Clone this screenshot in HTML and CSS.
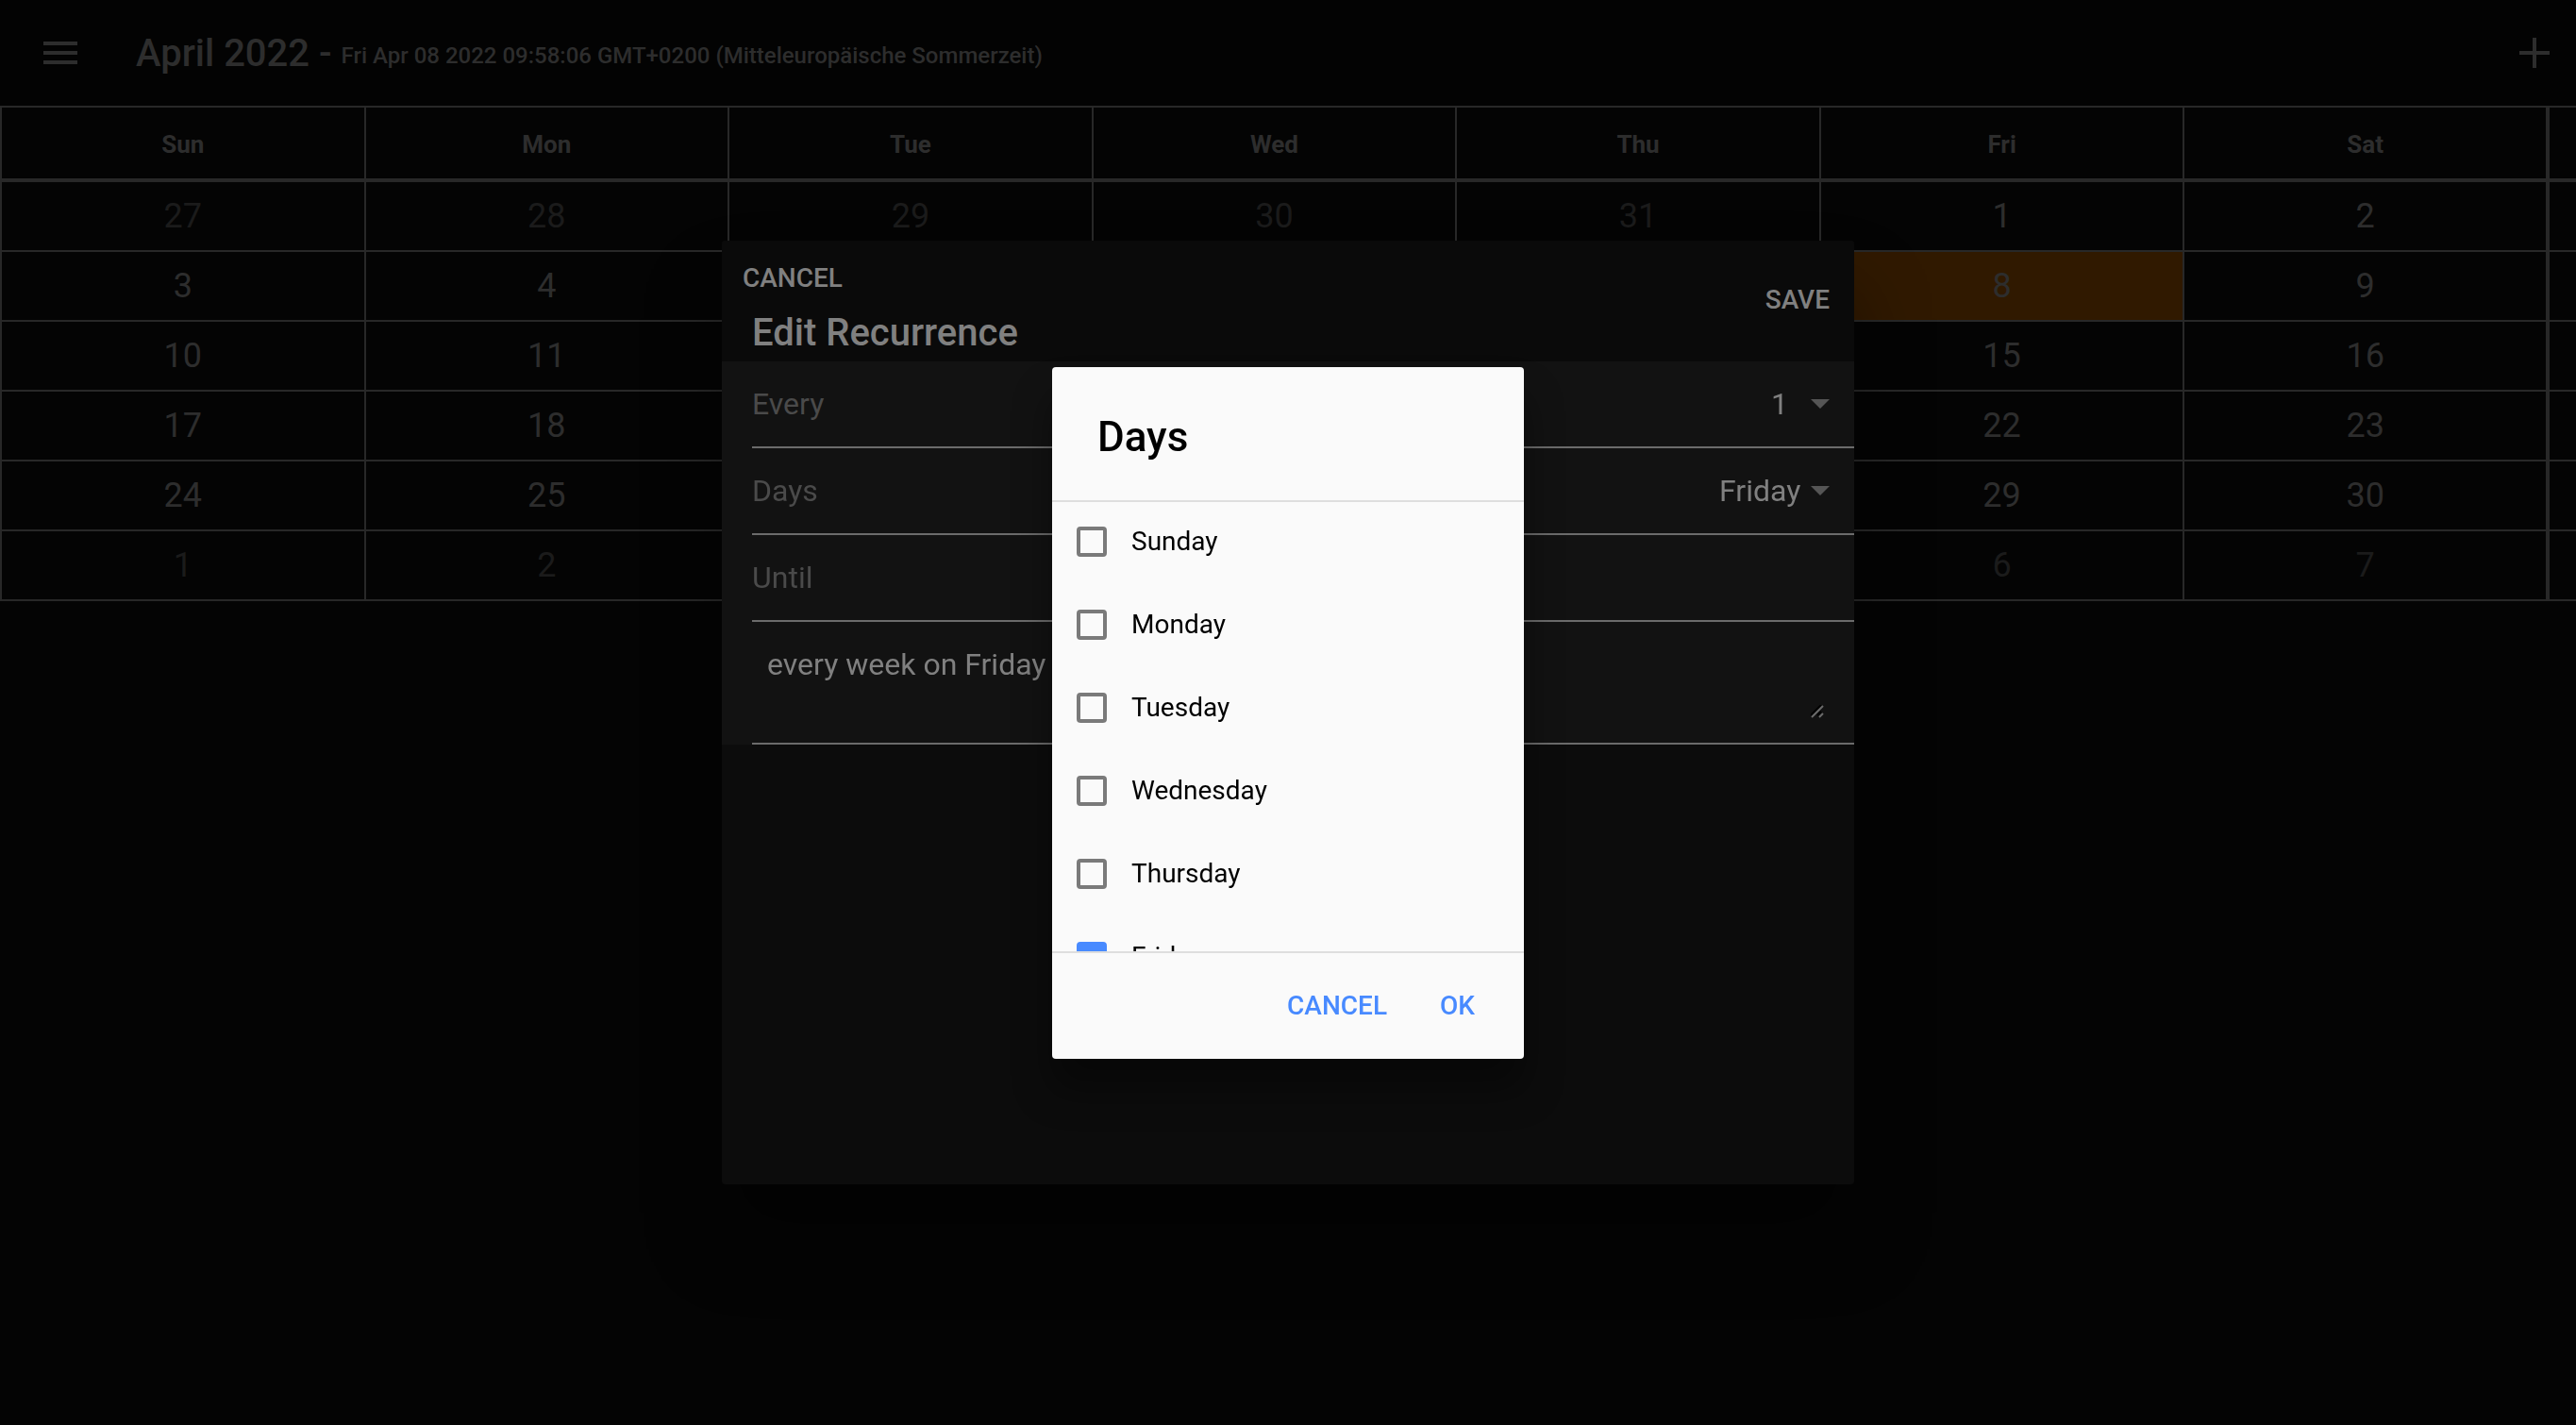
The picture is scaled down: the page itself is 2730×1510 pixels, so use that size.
FILE: index.html
```html
<!DOCTYPE html>
<html lang="en">
<head>
<meta charset="utf-8">
<title>April 2022</title>
<meta name="viewport" content="width=device-width, initial-scale=1">
<link rel="stylesheet" href="styles.css">
</head>
<body>
<header class="toolbar">
  <button class="icon-button" type="button" aria-label="Menu">
    <svg class="menu-icon" viewBox="0 0 36 24" aria-hidden="true"><path d="M0 0h36v4H0zM0 10h36v4H0zM0 20h36v4H0z"/></svg>
  </button>
  <h1 class="toolbar-title">April 2022 - <small class="toolbar-now">Fri Apr 08 2022 09:58:06 GMT+0200 (Mitteleuropäische Sommerzeit)</small></h1>
  <button class="icon-button" type="button" aria-label="Add event">
    <svg class="add-icon" viewBox="0 0 32 32" aria-hidden="true"><path d="M14 0h4v14h14v4H18v14h-4V18H0v-4h14z"/></svg>
  </button>
</header>

<main>
  <table class="month">
    <thead>
      <tr><th>Sun</th><th>Mon</th><th>Tue</th><th>Wed</th><th>Thu</th><th>Fri</th><th>Sat</th><td class="gutter"></td></tr>
    </thead>
    <tbody>
      <tr><td class="other">27</td><td class="other">28</td><td class="other">29</td><td class="other">30</td><td class="other">31</td><td>1</td><td>2</td><td class="gutter"></td></tr>
      <tr><td>3</td><td>4</td><td>5</td><td>6</td><td>7</td><td class="today">8</td><td>9</td><td class="gutter"></td></tr>
      <tr><td>10</td><td>11</td><td>12</td><td>13</td><td>14</td><td>15</td><td>16</td><td class="gutter"></td></tr>
      <tr><td>17</td><td>18</td><td>19</td><td>20</td><td>21</td><td>22</td><td>23</td><td class="gutter"></td></tr>
      <tr><td>24</td><td>25</td><td>26</td><td>27</td><td>28</td><td>29</td><td>30</td><td class="gutter"></td></tr>
      <tr><td class="other">1</td><td class="other">2</td><td class="other">3</td><td class="other">4</td><td class="other">5</td><td class="other">6</td><td class="other">7</td><td class="gutter"></td></tr>
    </tbody>
  </table>
</main>

<div class="overlay">
  <section class="modal" role="dialog" aria-labelledby="modal-title">
    <header class="modal-header">
      <div class="modal-heading">
        <button class="modal-button" type="button">CANCEL</button>
        <h2 class="modal-title" id="modal-title">Edit Recurrence</h2>
      </div>
      <button class="modal-button" type="button">SAVE</button>
    </header>
    <form class="fields">
      <div class="field">
        <label for="every">Every</label>
        <select class="field-select" id="every"><option>1</option></select>
        <svg class="caret" viewBox="0 0 20 10" aria-hidden="true"><path d="M0 0h20L10 10z"/></svg>
      </div>
      <div class="field">
        <label for="days">Days</label>
        <select class="field-select" id="days"><option>Friday</option></select>
        <svg class="caret" viewBox="0 0 20 10" aria-hidden="true"><path d="M0 0h20L10 10z"/></svg>
      </div>
      <div class="field">
        <label for="until">Until</label>
        <input class="field-input" id="until" type="text">
      </div>
      <div class="field field-tall">
        <textarea class="summary" aria-label="Summary" readonly>every week on Friday</textarea>
        <svg class="grip" viewBox="0 0 14 14" aria-hidden="true"><path class="grip-shade" d="M0 11L11 0M7 11l4-4"/><path d="M1 13L13 1M9 13l4-4"/></svg>
      </div>
    </form>
  </section>
</div>

<div class="overlay">
  <form class="alert" role="alertdialog" aria-labelledby="alert-title">
    <h2 class="alert-title" id="alert-title">Days</h2>
    <div class="choices">
      <label class="choice"><input type="checkbox">Sunday</label>
      <label class="choice"><input type="checkbox">Monday</label>
      <label class="choice"><input type="checkbox">Tuesday</label>
      <label class="choice"><input type="checkbox">Wednesday</label>
      <label class="choice"><input type="checkbox">Thursday</label>
      <label class="choice"><input type="checkbox" checked>Friday</label>
      <label class="choice"><input type="checkbox">Saturday</label>
    </div>
    <div class="alert-buttons">
      <button class="alert-button" type="button">CANCEL</button>
      <button class="alert-button" type="button">OK</button>
    </div>
  </form>
</div>
</body>
</html>
```
FILE: styles.css
```css
* {
  box-sizing: border-box;
}

body {
  margin: 0;
  min-height: 100vh;
  background: #040404;
  color: #2d2d2d;
  font-family: Roboto, "Liberation Sans", sans-serif;
  font-size: 32px;
}

h1,
h2 {
  margin: 0;
  font-weight: 500;
}

button,
input,
select,
textarea {
  margin: 0;
  padding: 0;
  border: 0;
  background: none;
  color: inherit;
  font: inherit;
}

svg {
  display: block;
  fill: currentColor;
}

/* Toolbar */

.toolbar {
  display: flex;
  align-items: center;
  height: 112px;
  padding: 0 12px 0 30px;
  background: #030303;
}

.icon-button {
  padding: 16px;
}

.menu-icon {
  width: 36px;
  height: 24px;
}

.add-icon {
  width: 32px;
  height: 32px;
}

.toolbar-title {
  flex: 1;
  padding: 2px 46px 0;
  font-size: 40px;
  line-height: 48px;
}

.toolbar-now {
  font-size: 24px;
  line-height: 24px;
  vertical-align: middle;
}

/* Month grid */

.month {
  width: 100%;
  table-layout: fixed;
  border-collapse: collapse;
  text-align: center;
}

.month th,
.month td {
  padding: 0;
  border: 2px solid #282828;
}

.month th {
  padding-top: 4px;
  font-size: 26px;
  font-weight: 700;
  line-height: 71px;
}

.month tbody td {
  font-size: 36px;
  line-height: 72px;
}

.month thead th,
.month thead td {
  border-bottom-width: 4px;
}

.month .gutter {
  width: 30px;
  border-left-width: 4px;
  border-right: 0;
}

.month .other {
  color: #1b1b1b;
}

.month .today {
  background: #301900;
}

/* Dialog layers */

.overlay {
  position: fixed;
  inset: 0;
  display: flex;
  align-items: center;
  justify-content: center;
}

.modal {
  width: 1200px;
  max-width: 100%;
  height: 1000px;
  max-height: 100%;
  overflow: hidden;
  border-radius: 4px;
  background: #0c0c0c;
  box-shadow: 0 56px 80px rgba(0, 0, 0, 0.4);
  color: #808080;
}

.modal-header {
  display: flex;
  align-items: center;
  justify-content: space-between;
  padding: 8px 26px 10px 22px;
  background: #0a0a0a;
}

.modal-heading {
  display: flex;
  flex-direction: column;
  align-items: flex-start;
  gap: 14px;
  padding-top: 8px;
}

.modal-button {
  font-size: 28px;
  font-weight: 500;
  line-height: 48px;
}

.modal-title {
  padding: 0 10px;
  font-size: 40px;
  line-height: 40px;
}

.fields {
  background: #121212;
  padding-left: 32px;
}

.field {
  display: flex;
  align-items: center;
  gap: 10px;
  height: 92px;
  padding-right: 26px;
  border-bottom: 2px solid #6b6b6b;
}

.field label {
  flex: 1;
  color: #4a4a4a;
}

.field-select {
  min-width: 32px;
  appearance: none;
}

.field-input {
  flex: 2;
  min-width: 0;
}

.caret {
  width: 20px;
  height: 10px;
  color: #555555;
}

.field-tall {
  position: relative;
  height: 130px;
  padding-right: 32px;
  align-items: stretch;
}

.summary {
  flex: 1;
  padding: 26px 16px;
  line-height: 38px;
  resize: none;
  outline: 0;
  overflow: hidden;
}

.grip {
  position: absolute;
  right: 32px;
  bottom: 26px;
  width: 14px;
  height: 14px;
  fill: none;
  stroke: #6b6b6b;
  stroke-width: 2;
}

.grip-shade {
  stroke: #000000;
}

/* Day picker */

.alert {
  width: 500px;
  max-width: 100%;
  border-radius: 4px;
  background: #fafafa;
  box-shadow: 0 32px 40px rgba(0, 0, 0, 0.4);
  color: #000000;
}

.alert-title {
  padding: 47px 48px 40px;
  font-size: 44px;
  line-height: 54px;
}

.choices {
  height: 480px;
  overflow-y: auto;
  scrollbar-width: none;
  border: solid #dedede;
  border-width: 2px 0;
}

.choice {
  display: flex;
  align-items: center;
  gap: 26px;
  height: 88px;
  padding: 0 26px 4px;
  font-size: 28px;
  line-height: 34px;
}

.choice input {
  display: grid;
  place-items: center;
  width: 32px;
  height: 32px;
  appearance: none;
  border: 4px solid #7a7a7a;
  border-radius: 4px;
}

.choice input:checked {
  border-color: #488aff;
  background: #488aff;
}

.choice input:checked::after {
  content: "";
  width: 12px;
  height: 22px;
  margin-bottom: 8px;
  border: solid #ffffff;
  border-width: 0 4px 4px 0;
  transform: rotate(45deg);
}

.alert-buttons {
  display: flex;
  justify-content: flex-end;
  gap: 16px;
  padding: 16px 32px;
}

.alert-button {
  height: 80px;
  padding: 0 20px;
  color: #488aff;
  font-size: 28px;
  font-weight: 500;
}
```
